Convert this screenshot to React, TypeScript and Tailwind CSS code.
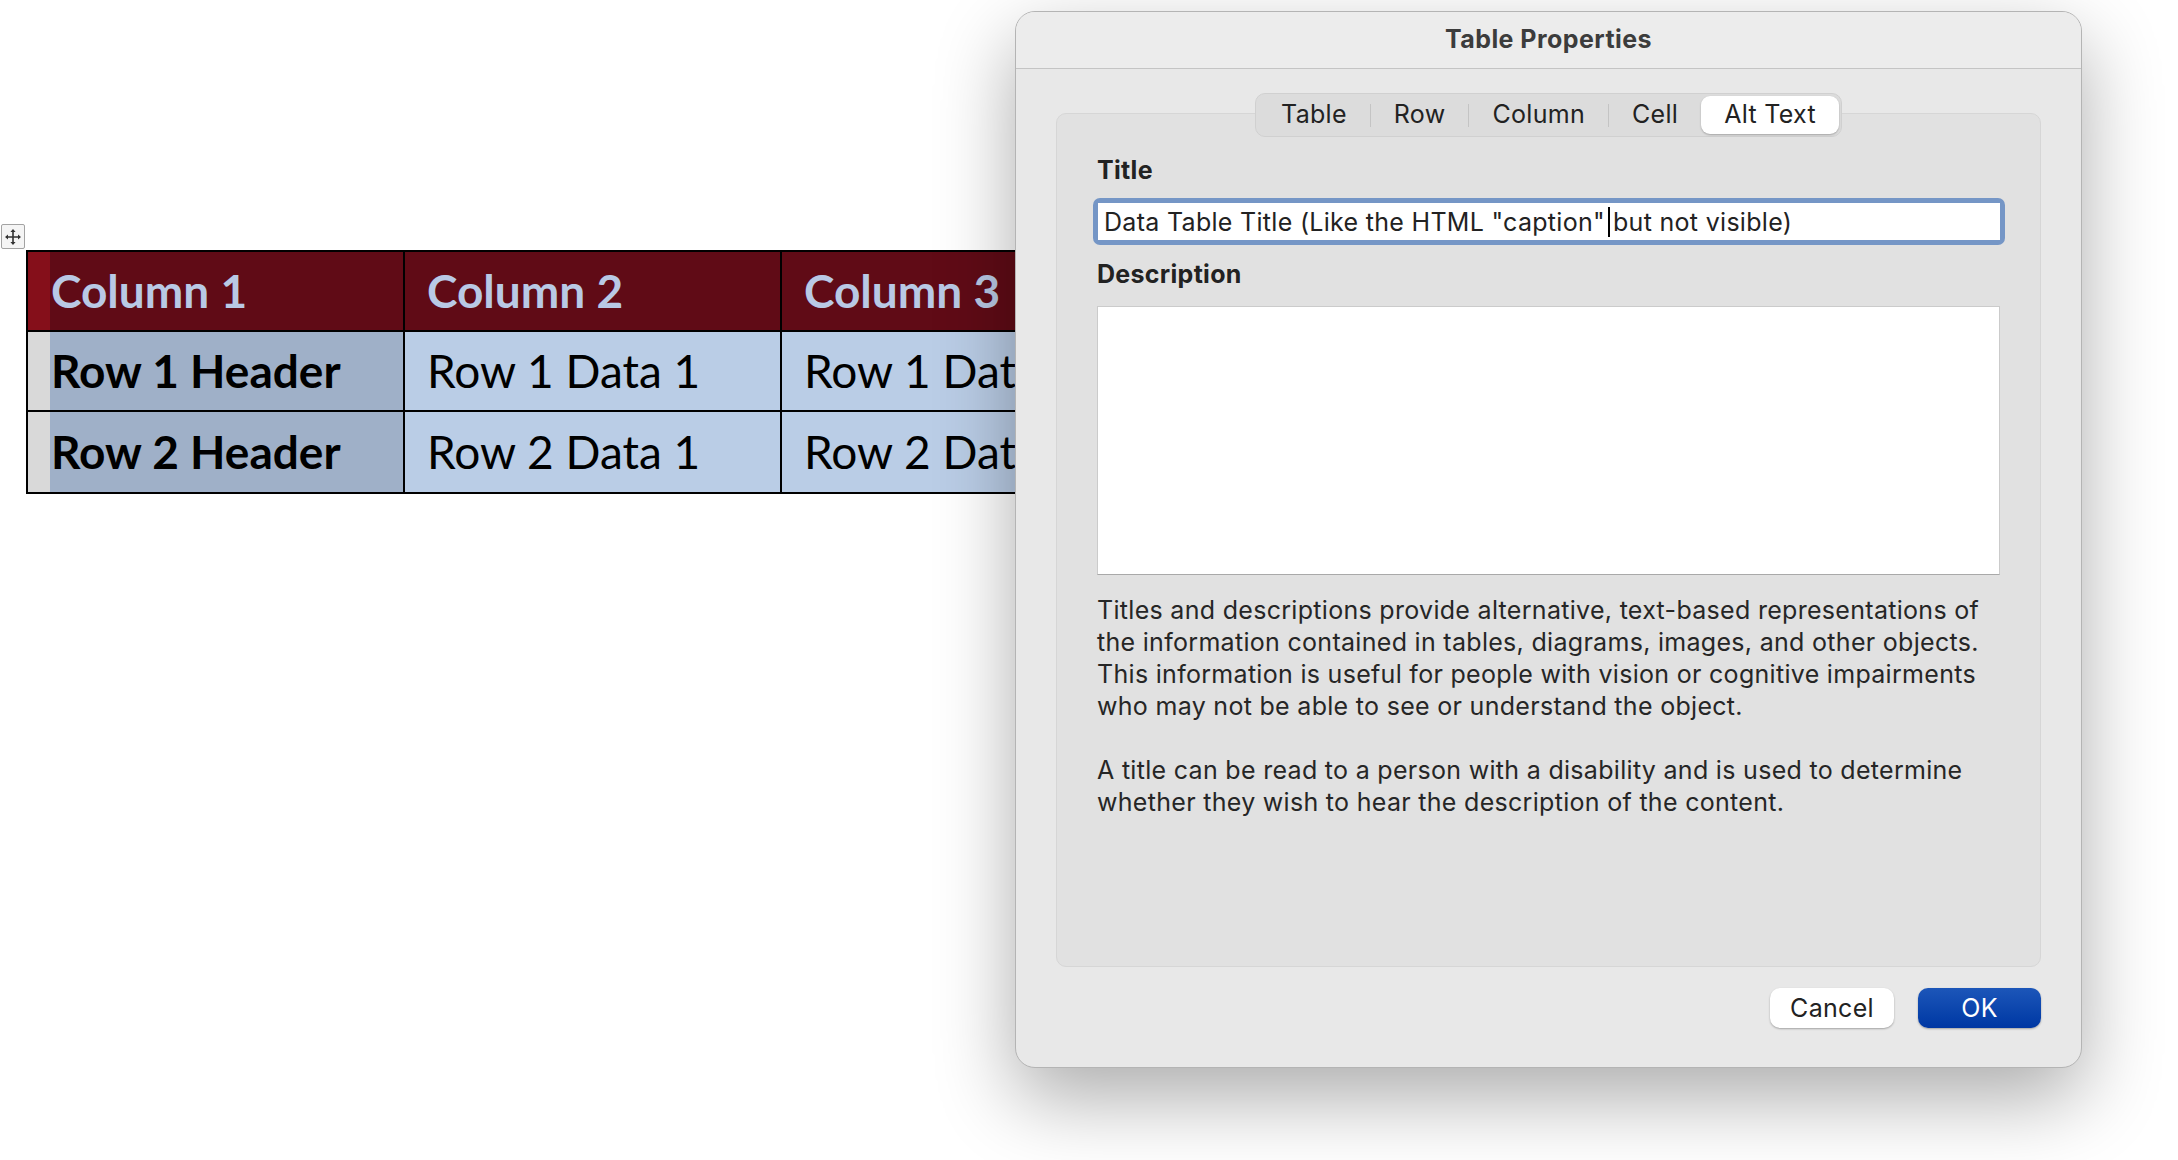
import React from 'react';

const tabs = ['Table', 'Row', 'Column', 'Cell', 'Alt Text'];

const MoveHandle: React.FC = () => (
  <div className="absolute left-[1px] top-[224px] flex h-[25px] w-[24px] items-center justify-center rounded-[2px] border border-[#a3a3a3] bg-[#f5f5f5]">
    <svg width="18" height="18" viewBox="0 0 18 18" fill="none">
      <path d="M9 2v14M2 9h14" stroke="#333" strokeWidth="1.6" />
      <path d="M9 1l-2.6 3h5.2zM9 17l-2.6-3h5.2zM1 9l3-2.6v5.2zM17 9l-3-2.6v5.2z" fill="#333" />
    </svg>
  </div>
);

const WordTable: React.FC = () => {
  const cell = 'w-[377px] shrink-0 border-r-2 border-black flex items-center';
  return (
    <div className="w-fit border-2 border-black font-['Lato',sans-serif] text-[46px] leading-none">
      <div className="flex h-[80px] border-b-2 border-black font-bold text-[#b9c9e5]">
        <div className={cell + ' bg-[#600b16]'}>
          <div className="h-full w-[22px] bg-[#850f1a]" />
          <span className="pl-[1px]">Column 1</span>
        </div>
        <div className={cell + ' bg-[#600b16] pl-[22px]'}>Column 2</div>
        <div className={cell + ' bg-[#600b16] pl-[22px]'}>Column 3</div>
      </div>
      {[1, 2].map((r) => (
        <div key={r} className={'flex h-[80px] text-black ' + (r === 1 ? 'border-b-2 border-black' : '')}>
          <div className={cell + ' bg-[#9fb0c8] font-bold'}>
            <div className="h-full w-[22px] bg-[#d9d9d9]" />
            <span className="pl-[1px]">Row {r} Header</span>
          </div>
          <div className={cell + ' bg-[#bacde6] pl-[22px]'}>Row {r} Data 1</div>
          <div className={cell + ' bg-[#bacde6] pl-[22px]'}>Row {r} Data 2</div>
        </div>
      ))}
    </div>
  );
};

const Dialog: React.FC = () => (
  <div className="absolute left-[1015px] top-[11px] z-10 flex h-[1057px] w-[1067px] flex-col overflow-hidden rounded-[20px] border border-[#b4b4b4] bg-[#e8e8e8] font-['Inter',sans-serif] text-[25px] leading-[32px] tracking-[0.3px] text-[#262626] shadow-[0_30px_80px_rgba(0,0,0,0.33)]">
    <div className="flex h-[57px] shrink-0 items-center justify-center border-b border-[#c4c4c4] bg-[#ececec] pb-[2px] font-bold tracking-[0.45px] text-[#3c3c3c]">
      Table Properties
    </div>
    <div className="flex flex-1 flex-col px-[40px] pb-[39px] pt-[44px]">
      <div className="flex flex-1 flex-col rounded-[10px] border border-[#d6d6d6] bg-[#e1e1e1] px-[40px]">
        <div className="mx-auto -mt-[21px] flex h-[44px] items-center rounded-[10px] border border-[#d0d0d0] bg-[#dcdcdc] p-[2px]">
          {tabs.map((t, i) => {
            const active = t === 'Alt Text';
            const sep = i > 0 && !active;
            return (
              <div key={t} className="flex h-full items-center">
                {sep && <div className="h-[23px] w-px bg-[#c4c4c4]" />}
                <div
                  className={
                    'flex h-full items-center px-[23px] pb-[2px] text-[#222] ' +
                    (active ? 'rounded-[9px] bg-white shadow-[0_1px_2px_rgba(0,0,0,0.25)]' : '')
                  }
                >
                  {t}
                </div>
              </div>
            );
          })}
        </div>

        <div className="mt-[17px] font-bold text-[#222]">Title</div>
        <div className="-ml-[4px] -mr-[5px] mt-[12px] rounded-[7px] bg-[#7596c6] p-[5px]">
          <div className="flex h-[37px] items-center whitespace-nowrap bg-white pl-[6px] text-[#222]">
            Data Table Title (Like the HTML "caption"
            <span className="mx-[3px] inline-block h-[30px] w-[2px] bg-black" />
            but not visible)
          </div>
        </div>

        <div className="mt-[13px] font-bold text-[#222]">Description</div>
        <div className="mt-[16px] h-[269px] border border-[#cbcbcb] border-b-[#a9a9a9] bg-white" />

        <p className="mt-[19px]">
          Titles and descriptions provide alternative, text-based representations of the information contained in
          tables, diagrams, images, and other objects. This information is useful for people with vision or
          cognitive impairments who may not be able to see or understand the object.
        </p>
        <p className="mt-[32px]">
          A title can be read to a person with a disability and is used to determine whether they wish to hear the
          description of the content.
        </p>
      </div>

      <div className="mt-[21px] flex justify-end gap-[24px]">
        <button className="h-[40px] w-[124px] rounded-[10px] bg-white text-[#222] shadow-[0_1px_2px_rgba(0,0,0,0.3)]">
          Cancel
        </button>
        <button className="h-[40px] w-[123px] rounded-[10px] bg-gradient-to-b from-[#1c56b9] to-[#0037a3] text-white shadow-[0_1px_2px_rgba(0,0,0,0.3)]">
          OK
        </button>
      </div>
    </div>
  </div>
);

const App: React.FC = () => {
  return (
    <div className="relative h-[1160px] w-full overflow-hidden bg-white">
      <MoveHandle />
      <div className="pl-[26px] pt-[250px]">
        <WordTable />
      </div>
      <Dialog />
    </div>
  );
};

export default App;
